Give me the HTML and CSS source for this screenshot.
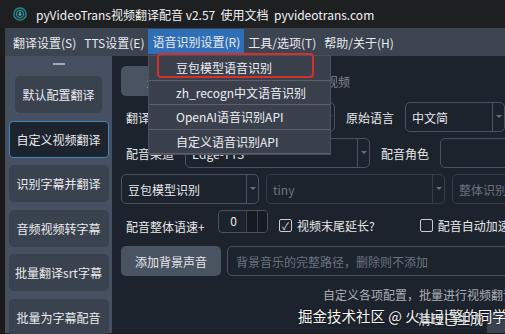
FILE: index.html
```html
<!DOCTYPE html>
<html lang="zh-CN">
<head>
    <meta charset="UTF-8">
    <title>pyVideoTrans</title>
    <link rel="stylesheet" href="styles.css">
</head>
<body>
    <div class="titlebar">
        <svg class="app-icon" width="14" height="14" viewBox="0 0 14 14">
            <circle cx="7" cy="7" r="6.2" fill="#123c42" stroke="#2d8f96" stroke-width="1.2"/>
            <circle cx="7" cy="7" r="3.6" fill="#0b2a2f" stroke="#4fb3b8" stroke-width="0.8"/>
            <path d="M7 4.6 V8.2 M5.6 6.9 L7 8.4 L8.4 6.9" stroke="#9fe3e6" stroke-width="0.9" fill="none"/>
        </svg>
        <span class="title">pyVideoTrans视频翻译配音 v2.57&nbsp;&nbsp;使用文档&nbsp;&nbsp;pyvideotrans.com</span>
    </div>

    <div class="frame">
        <div class="menubar">
            <span class="menu-item">翻译设置(S)</span>
            <span class="menu-item">TTS设置(E)</span>
            <span class="menu-item active">语音识别设置(R)</span>
            <span class="menu-item">工具/选项(T)</span>
            <span class="menu-item">帮助/关于(H)</span>
        </div>

        <div class="content">
            <aside class="sidebar">
                <div class="handle"></div>
                <div class="side-btn narrow">默认配置翻译</div>
                <div class="side-btn selected">自定义视频翻译</div>
                <div class="side-btn">识别字幕并翻译</div>
                <div class="side-btn">音频视频转字幕</div>
                <div class="side-btn">批量翻译srt字幕</div>
                <div class="side-btn">批量为字幕配音</div>
            </aside>

            <main class="main">
                <div class="row">
                    <div class="btn tab">选择视频</div>
                    <span class="hint">选择要翻译的视频</span>
                </div>
                <div class="row">
                    <span class="label">翻译渠道</span>
                    <div class="combo w150"><span>微软翻译</span><i class="arrow"></i></div>
                    <span class="label gap">原始语言</span>
                    <div class="combo w100 gap"><span>中文简</span><i class="arrow"></i></div>
                </div>
                <div class="row">
                    <span class="label">配音渠道</span>
                    <div class="combo w185"><span>Edge-TTS</span><i class="arrow"></i></div>
                    <span class="label gap">配音角色</span>
                    <div class="combo w80 gap"><span></span><i class="arrow"></i></div>
                </div>
                <div class="row">
                    <div class="combo w138"><span>豆包模型识别</span><i class="arrow"></i></div>
                    <div class="combo w179 off"><span>tiny</span><i class="arrow"></i></div>
                    <div class="combo w80 off"><span>整体识别</span><i class="arrow"></i></div>
                </div>
                <div class="row options">
                    <span class="label speed">配音整体语速+</span>
                    <div class="spin"><span>0</span><i></i><i></i></div>
                    <label class="check on"><b>✓</b>视频末尾延长?</label>
                    <label class="check far"><b></b>配音自动加速</label>
                </div>
                <div class="row">
                    <div class="btn bgm">添加背景声音</div>
                    <div class="input">背景音乐的完整路径，删除则不添加</div>
                </div>
                <div class="note">自定义各项配置，批量进行视频翻译</div>
                <div class="bottom">
                    <span class="clean">清理已生成</span>
                    <span class="corner"></span>
                </div>
            </main>
        </div>
    </div>

    <div class="dropdown">
        <div class="drop-item">豆包模型语音识别</div>
        <div class="drop-item">zh_recogn中文语音识别</div>
        <div class="drop-item">OpenAI语音识别API</div>
        <div class="drop-item">自定义语音识别API</div>
        <div class="mark"></div>
    </div>

    <div class="watermark">掘金技术社区 @ 火山引擎的同学</div>
</body>
</html>
```

FILE: styles.css
```css
body {
    margin: 0;
    width: 505px;
    height: 334px;
    overflow: hidden;
    position: relative;
    background: #1b1b1c;
    font-family: "Noto Sans CJK SC", "Noto Sans", sans-serif;
    font-size: 12px;
    color: #e6e8eb;
}
.titlebar {
    height: 28px;
    display: flex;
    align-items: center;
    background: #1e1f21;
    padding-left: 13px;
}
.app-icon {
    margin-right: 9px;
}
.title {
    font-size: 12px;
    color: #f2f2f2;
    white-space: nowrap;
}
.frame {
    padding-left: 5px;
}
/* menu bar */
.menubar {
    height: 28px;
    display: flex;
    align-items: stretch;
    background: #3c4451;
    padding-left: 4px;
}
.menu-item {
    display: flex;
    align-items: center;
    padding: 0 4px;
    white-space: nowrap;
    color: #e8eaee;
}
.menu-item.active {
    background: #2f6fb8;
    margin: 1px 0 2px;
}
.content {
    display: flex;
    height: 277px;
}
/* sidebar */
.sidebar {
    width: 107px;
    flex-shrink: 0;
    background: #465060;
    display: flex;
    flex-direction: column;
    align-items: center;
    gap: 7.5px;
}
.handle {
    width: 12px;
    height: 2px;
    border-top: 1px solid #a3a9b1;
    border-bottom: 1px solid #a3a9b1;
    margin: 7px 0 3.5px;
}
.side-btn {
    width: 100px;
    height: 37px;
    box-sizing: border-box;
    flex-shrink: 0;
    display: flex;
    align-items: center;
    justify-content: center;
    background: #39424e;
    border-radius: 5px;
    color: #e9ebee;
    white-space: nowrap;
}
.side-btn.narrow {
    width: 87px;
}
.side-btn.selected {
    background: #1d242e;
    border: 1px solid #3d86c6;
    border-radius: 4px;
}
/* main panel */
.main {
    flex: 1;
    background: #1d232c;
    padding: 10px 0 0 9px;
    overflow: hidden;
    display: flex;
    flex-direction: column;
    gap: 6px;
}
.row {
    height: 30px;
    display: flex;
    align-items: center;
    flex-shrink: 0;
    white-space: nowrap;
}
.btn {
    height: 30px;
    box-sizing: border-box;
    display: flex;
    align-items: center;
    justify-content: center;
    background: #4a5361;
    border-radius: 5px;
    color: #e6e8eb;
    flex-shrink: 0;
}
.tab {
    width: 100px;
}
.hint {
    margin-left: 33px;
    color: #7f868f;
}
.label {
    width: 64px;
    padding-left: 5px;
    box-sizing: border-box;
    flex-shrink: 0;
}
.label.gap {
    width: auto;
    padding-left: 0;
    margin-left: 11px;
}
.combo {
    height: 30px;
    box-sizing: border-box;
    border: 1px solid #4a5260;
    border-radius: 5px;
    display: flex;
    align-items: stretch;
    flex-shrink: 0;
}
.combo + .combo {
    margin-left: 7px;
}
.combo.gap {
    margin-left: 11px;
}
.combo span {
    flex: 1;
    display: flex;
    align-items: center;
    padding-left: 6px;
    overflow: hidden;
}
.arrow {
    width: 11px;
    border-left: 1px solid #4a5260;
    position: relative;
}
.arrow::after {
    content: "";
    position: absolute;
    left: 3px;
    top: 12px;
    border-left: 3px solid transparent;
    border-right: 3px solid transparent;
    border-top: 3px solid #69717e;
}
.combo.off {
    border-color: #363d49;
    color: #6b7380;
}
.combo.off .arrow {
    border-color: #363d49;
}
.w80 { width: 80px; }
.w100 { width: 100px; }
.w138 { width: 138px; }
.w150 { width: 150px; }
.w179 { width: 179px; }
.w185 { width: 185px; }
/* options row */
.options {
    align-items: flex-start;
}
.speed {
    width: 97px;
    line-height: 30px;
    padding-top: 2px;
}
.spin {
    width: 50px;
    height: 23px;
    box-sizing: border-box;
    border: 1px solid #4a5260;
    border-radius: 4px;
    display: flex;
    overflow: hidden;
    flex-shrink: 0;
}
.spin span {
    width: 25px;
    text-align: center;
    line-height: 20px;
    padding-left: 2px;
}
.spin i {
    flex: 1;
    background: #161b22;
    border-left: 1px solid #3c4350;
}
.check {
    display: flex;
    align-items: center;
    margin-left: 11px;
    height: 30px;
}
.check b {
    width: 11px;
    height: 11px;
    border: 1px solid #c9cdd3;
    border-radius: 2px;
    margin-right: 5px;
    font-size: 10px;
    line-height: 11px;
    text-align: center;
    font-weight: normal;
}
.check.far {
    margin-left: 45px;
}
.bgm {
    width: 100px;
}
.input {
    width: 300px;
    height: 30px;
    box-sizing: border-box;
    margin-left: 6px;
    border: 1px solid #4a5260;
    border-radius: 5px;
    padding-left: 8px;
    display: flex;
    align-items: center;
    color: #6b7380;
    flex-shrink: 0;
}
.note {
    margin: 4px 0 0 202px;
    color: #a9aeb6;
    white-space: nowrap;
}
.bottom {
    display: flex;
    align-items: flex-start;
    margin-top: 4px;
    height: 30px;
}
.clean {
    margin-left: 297px;
    margin-top: -4px;
    color: #e9ebee;
    font-size: 13px;
}
.corner {
    width: 18px;
    height: 26px;
    margin-left: auto;
    background: #3b4350;
}
/* popup menu */
.dropdown {
    position: absolute;
    left: 148px;
    top: 55px;
    width: 183px;
    box-sizing: border-box;
    background: #3a414d;
    border: 1px solid #4a515d;
}
.drop-item {
    height: 23.5px;
    display: flex;
    align-items: center;
    padding-left: 27px;
    border-bottom: 1px solid #59606c;
    color: #eceef1;
    white-space: nowrap;
}
.drop-item:last-of-type {
    border-bottom: none;
}
.mark {
    position: absolute;
    left: 8px;
    top: -3px;
    width: 157px;
    height: 25px;
    box-sizing: border-box;
    border: 2px solid #d6302b;
    border-radius: 4px;
}
.watermark {
    position: absolute;
    left: 298px;
    top: 305px;
    font-size: 14.5px;
    color: #f4f4f4;
    text-shadow: 0 0 2px rgba(0, 0, 0, 0.6);
    white-space: nowrap;
}
```
